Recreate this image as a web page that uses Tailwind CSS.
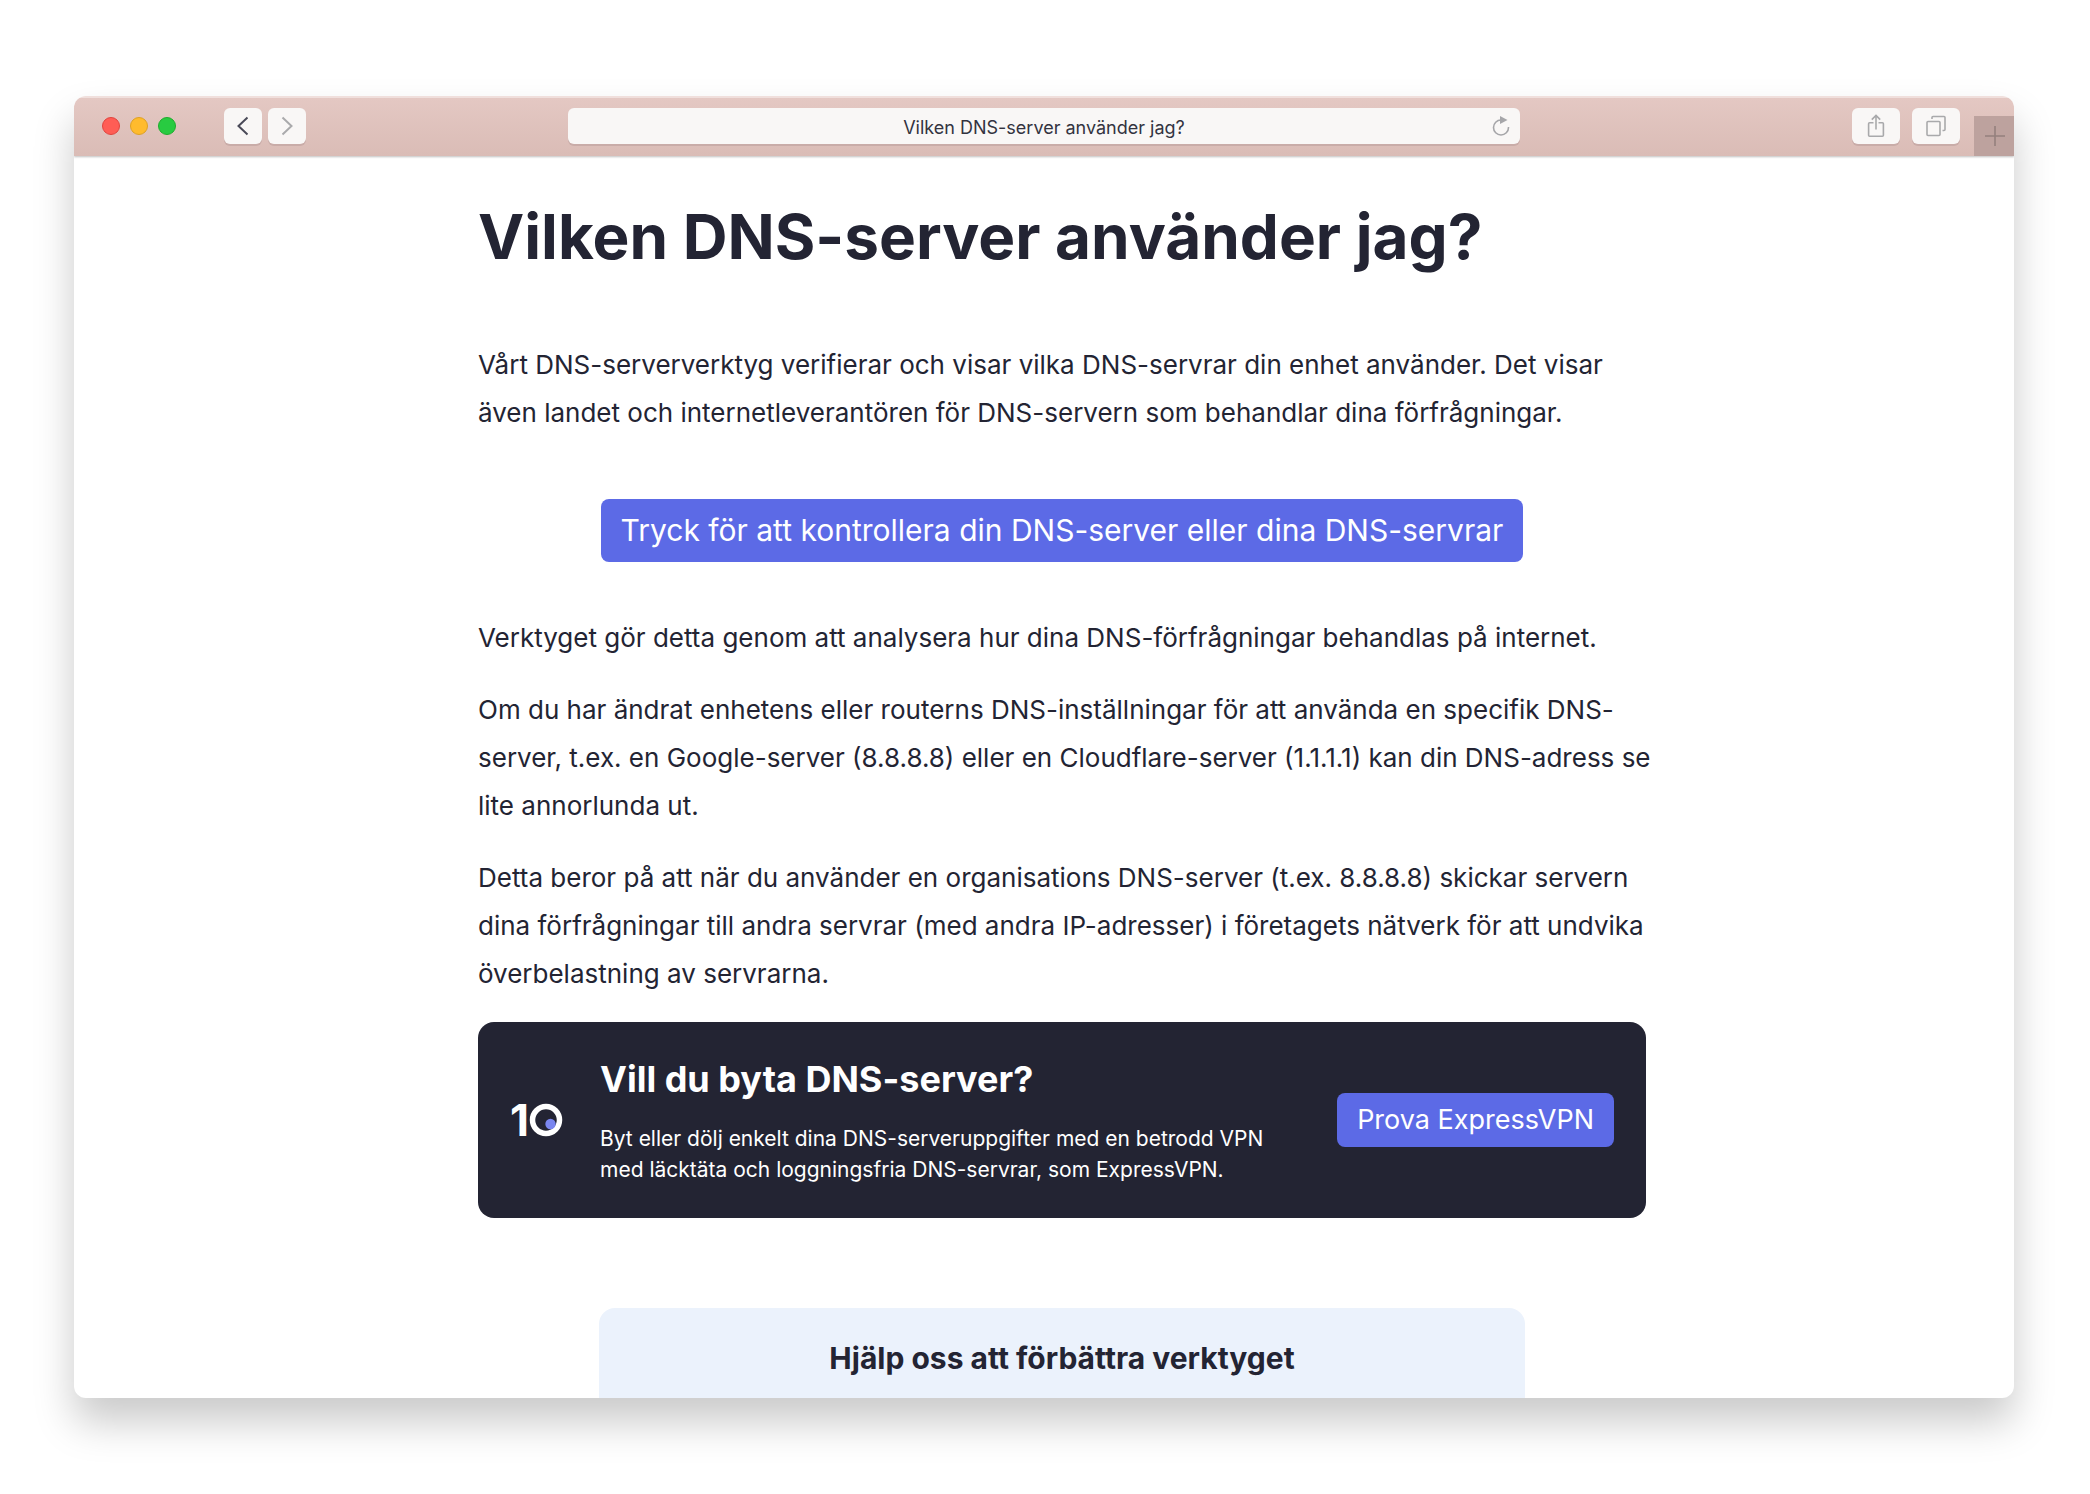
<!DOCTYPE html>
<html lang="sv">
<head>
    <meta charset="UTF-8">
    <meta name="viewport" content="width=device-width, initial-scale=1.0">
    <title>Vilken DNS-server använder jag?</title>
    <!-- Include Tailwind CSS for styling -->
    <script src="https://cdn.jsdelivr.net/npm/@tailwindcss/browser@4"></script>
    <style>
        body {
            font-family: 'Inter', 'Liberation Sans', sans-serif;
        }
    </style>
</head>
<body class="bg-white text-[#232433]">

    <div class="h-screen flex flex-col pt-24 pb-24 pl-[74px] pr-[76px]">
        <!-- Browser window -->
        <div class="flex-1 min-h-0 flex flex-col rounded-xl overflow-hidden bg-white shadow-[0_24px_40px_rgba(0,0,0,0.21)]">

            <!-- Toolbar -->
            <header class="relative z-10 shrink-0 h-[60px] pb-[2px] grid grid-cols-[1fr_minmax(0,952px)_1fr] items-center bg-linear-to-b from-[#e4c8c3] to-[#dabcb6] border-t-2 border-[#f0dfdc] shadow-[0_1px_2px_rgba(0,0,0,0.25)]">
                <div class="flex items-center pl-7">
                    <div class="flex gap-[10px]">
                        <span class="size-[18px] rounded-full bg-[#ff5d55] border border-[#e0443e]"></span>
                        <span class="size-[18px] rounded-full bg-[#ffbb2d] border border-[#dea123]"></span>
                        <span class="size-[18px] rounded-full bg-[#28cb41] border border-[#1dad2c]"></span>
                    </div>
                    <nav class="flex gap-[6px] ml-12">
                        <button type="button" aria-label="Bakåt" class="w-[38px] h-9 rounded-md bg-[#f9f7f6] shadow-[0_2px_0_#c9aca8] flex items-center justify-center">
                            <svg width="12" height="20" viewBox="0 0 12 20" fill="none" stroke="#4a4a58" stroke-width="2"><path d="M10.5 1.5 1.5 10l9 8.5"/></svg>
                        </button>
                        <button type="button" aria-label="Framåt" class="w-[38px] h-9 rounded-md bg-[#f9f7f6] shadow-[0_2px_0_#c9aca8] flex items-center justify-center">
                            <svg width="12" height="20" viewBox="0 0 12 20" fill="none" stroke="#aaaaac" stroke-width="2"><path d="m1.5 1.5 9 8.5-9 8.5"/></svg>
                        </button>
                    </nav>
                </div>

                <div class="relative">
                    <input type="text" aria-label="Adress" value="Vilken DNS-server använder jag?" class="block w-full h-9 pt-[2px] rounded-md bg-[#f9f7f6] shadow-[0_2px_0_#c9aca8] px-12 text-center text-[18px] text-[#33333f] outline-none">
                    <button type="button" aria-label="Läs in igen" class="absolute right-[10px] top-2">
                        <svg width="18" height="21" viewBox="0 0 18 21" fill="none"><path d="M9 4a7.5 7.5 0 1 0 7.500 7.500V11" stroke="#a6a6a9" stroke-width="1.6"/><path d="M8 0v8l7.500-4z" fill="#a6a6a9"/></svg>
                    </button>
                </div>

                <div class="h-[58px] -mb-[2px] flex justify-end">
                    <div class="flex items-center gap-3 mr-[14px] pb-[2px]">
                        <button type="button" aria-label="Dela" class="w-12 h-9 rounded-md bg-[#f9f7f6] shadow-[0_2px_0_#c9aca8] flex items-center justify-center">
                            <svg width="18" height="24" viewBox="0 0 18 24" fill="none" stroke="#a9a9ab" stroke-width="1.6"><path d="M6.500 8.800H2.600a1 1 0 0 0-1 1v11.400a1 1 0 0 0 1 1h12.800a1 1 0 0 0 1-1V9.800a1 1 0 0 0-1-1h-3.900M9 15.500V1.500M4.800 5.600 9 1.400l4.200 4.200"/></svg>
                        </button>
                        <button type="button" aria-label="Visa flikar" class="w-12 h-9 rounded-md bg-[#f9f7f6] shadow-[0_2px_0_#c9aca8] flex items-center justify-center">
                            <svg width="20" height="22" viewBox="0 0 20 22" fill="none" stroke="#a9a9ab" stroke-width="1.6"><rect x="1" y="6.5" width="13" height="14" rx="1"/><path d="M6 4V2.500a1 1 0 0 1 1-1h11a1 1 0 0 1 1 1v12a1 1 0 0 1-1 1h-1.500"/></svg>
                        </button>
                    </div>
                    <button type="button" aria-label="Ny flik" class="self-end w-10 h-10 bg-[#bda29e] flex items-center justify-center">
                        <svg class="ml-[2px]" width="20" height="20" viewBox="0 0 20 20" fill="none" stroke="#94807d" stroke-width="1.6"><path d="M10 0v20M0 10h20"/></svg>
                    </button>
                </div>
            </header>

            <!-- Page Content -->
            <main class="flex-1 min-h-0 overflow-hidden pl-9">
                <div class="w-full max-w-[1168px] mx-auto pt-[41px]">
                    <h1 class="text-[62px] leading-[80px] font-bold">Vilken DNS-server använder jag?</h1>

                    <p class="mt-16 text-[26px] leading-[48px]">
                        Vårt DNS-serververktyg verifierar och visar vilka DNS-servrar din enhet använder. Det visar
                        även landet och internetleverantören för DNS-servern som behandlar dina förfrågningar.
                    </p>

                    <div class="mt-[62px] flex justify-center">
                        <button type="button" class="h-[63px] px-5 rounded-lg bg-[#5c6ae6] text-white text-[30px] whitespace-nowrap">Tryck för att kontrollera din DNS-server eller dina DNS-servrar</button>
                    </div>

                    <div class="mt-[52px] -mr-3 flex flex-col gap-6 text-[26px] leading-[48px]">
                        <p>Verktyget gör detta genom att analysera hur dina DNS-förfrågningar behandlas på internet.</p>
                        <p>
                            Om du har ändrat enhetens eller routerns DNS-inställningar för att använda en specifik DNS-server,
                            t.ex. en Google-server (8.8.8.8) eller en Cloudflare-server (1.1.1.1) kan din DNS-adress se
                            lite annorlunda ut.
                        </p>
                        <p>
                            Detta beror på att när du använder en organisations DNS-server (t.ex. 8.8.8.8) skickar servern
                            dina förfrågningar till andra servrar (med andra IP-adresser) i företagets nätverk för att undvika
                            överbelastning av servrarna.
                        </p>
                    </div>

                    <!-- VPN banner -->
                    <section class="mt-6 h-[196px] flex items-center rounded-2xl bg-[#232433] text-white pl-8 pr-8">
                        <div class="shrink-0 w-[90px] flex items-center" role="img" aria-label="10">
                            <span class="text-[44px] leading-[54px] font-bold">1</span>
                            <svg width="34" height="34" viewBox="0 0 34 34" fill="none">
                                <circle cx="17" cy="17" r="13.5" stroke="#fff" stroke-width="5.5"/>
                                <circle cx="21.5" cy="21" r="5.2" fill="#7a86f0"/>
                            </svg>
                        </div>
                        <div class="flex-1 flex flex-col gap-5">
                            <h2 class="text-[36px] leading-[48px] font-bold">Vill du byta DNS-server?</h2>
                            <p class="max-w-[680px] text-[21px] leading-[31px]">Byt eller dölj enkelt dina DNS-serveruppgifter med en betrodd VPN med läcktäta och loggningsfria DNS-servrar, som ExpressVPN.</p>
                        </div>
                        <a href="#" class="h-[54px] px-5 rounded-lg bg-[#5c6ae6] text-[27px] leading-[54px] whitespace-nowrap">Prova ExpressVPN</a>
                    </section>

                    <!-- Feedback box -->
                    <section class="w-full max-w-[926px] mx-auto mt-[90px] h-[200px] pt-[30px] rounded-2xl bg-[#ebf2fc] text-center">
                        <h2 class="text-[30px] leading-10 font-bold">Hjälp oss att förbättra verktyget</h2>
                    </section>
                </div>
            </main>
        </div>
    </div>

</body>
</html>
